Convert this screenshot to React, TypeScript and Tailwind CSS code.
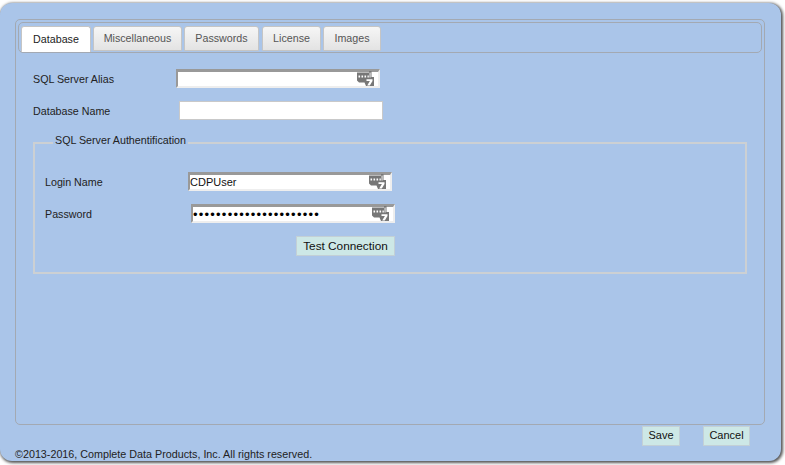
const labelClass = "text-[10.7px] text-[#222] pt-[2px]";

function KeyIcon() {
  return (
    <svg className="absolute right-[6px] top-[2px] w-[17px] h-[15px]" viewBox="0 0 17 15">
      <path d="M0 1.5h12V0h2.5v6H17v9H9l-1.5-3.5H2L0 9.5z" fill="#777" />
      <path d="M1.5 4.6h1.6v1.8H1.5zM4.5 4.6h1.6v1.8H4.5zM7.5 4.6h1.6v1.8H7.5zM10.5 4.6h1.3v1.8h-1.3zM12.6 1.5h.9v4.9h-.9z" fill="#fff" />
      <path d="M9.5 8.2h6v1.7L12.8 14.5h-2.6l2.7-4.4H9.5z" fill="#fff" />
    </svg>
  );
}

function SecureInput({ value, dots }: { value?: string; dots?: boolean }) {
  return (
    <div className="relative h-[19px] w-[204px] bg-white border-t-[3px] border-l-2 border-t-[#999] border-l-[#999] border-r-2 border-b-2 border-r-[#eee] border-b-[#eee]">
      <span className={dots ? "absolute left-0 top-[1px] text-[13px] leading-[14px] tracking-[1.22px] text-black" : "absolute left-0 top-[0px] text-[11px] leading-[14px] text-[#111]"}>
        {value}
      </span>
      <div className="absolute -right-[2px] -top-[3px] w-[24px] h-[19px]">
        <KeyIcon />
      </div>
    </div>
  );
}

function Tab({ label, active, width, margin }: { label: string; active?: boolean; width: string; margin: string }) {
  return (
    <div
      className={
        active
          ? `${width} ${margin} h-[26px] flex items-center justify-center rounded-t-[3px] border border-b-0 border-[#c5c5c5] bg-white text-[10.7px] text-[#222]`
          : `${width} ${margin} h-[25px] flex items-center justify-center rounded-t-[3px] border border-[#c5c5c5] bg-gradient-to-b from-[#f6f6f6] to-[#e3e3e3] text-[10.7px] text-[#555]`
      }
    >
      {label}
    </div>
  );
}

function ActionButton({ label, className }: { label: string; className: string }) {
  return (
    <button className={`flex items-center justify-center bg-[#cde8e6] border border-[#c3d0d6] text-[#111] ${className}`}>
      {label}
    </button>
  );
}

export default function App() {
  return (
    <div className="w-[785px] h-[465px] bg-white overflow-hidden pt-[3px] font-['Liberation_Sans',Arial,sans-serif]">
      <div className="w-[781px] h-[458px] bg-[#aac5e9] rounded-[12px] shadow-[1px_1px_3px_1px_#555] pt-[16px] px-[15px]">
        <div className="w-[750px] h-[406px] rounded-[5px] border border-[#a3a9b2] p-[2px]">
          <div className="h-[31px] rounded-[5px] border border-[#a3a9b2] pl-[2px] pt-[3px] flex items-start">
            <Tab label="Database" active width="w-[70px]" margin="" />
            <Tab label="Miscellaneous" width="w-[89px]" margin="ml-[2px]" />
            <Tab label="Passwords" width="w-[75px]" margin="ml-[2px]" />
            <Tab label="License" width="w-[59px]" margin="ml-[3px]" />
            <Tab label="Images" width="w-[58px]" margin="ml-[2px]" />
          </div>

          <div className="pt-[16px] pl-[15px]">
            <div className="flex items-center h-[19px]">
              <span className={`${labelClass} w-[143px]`}>SQL Server Alias</span>
              <SecureInput />
            </div>
            <div className="flex items-center h-[19px] mt-[13px]">
              <span className={`${labelClass} w-[146px]`}>Database Name</span>
              <div className="w-[204px] h-[19px] bg-white border border-[#c9c9c9]" />
            </div>

            <fieldset className="w-[714px] h-[140px] mt-[14px] border-2 border-[#ccd0d3] pl-[10px]">
              <legend className="ml-[8px] px-[2px] pb-[4px] text-[10.7px] leading-[13px] text-[#222]">SQL Server Authentification</legend>
              <div className="flex items-center h-[19px] mt-[21px]">
                <span className={`${labelClass} w-[143px]`}>Login Name</span>
                <SecureInput value="CDPUser" />
              </div>
              <div className="flex items-center h-[19px] mt-[13px]">
                <span className={`${labelClass} w-[146px]`}>Password</span>
                <SecureInput value="••••••••••••••••••••••" dots />
              </div>
              <div className="mt-[13px] ml-[251px]">
                <ActionButton label="Test Connection" className="w-[99px] h-[20px] pt-[1px] text-[11.8px]" />
              </div>
            </fieldset>
          </div>
        </div>

        <div className="flex justify-end pr-[16px] mt-[1px]">
          <ActionButton label="Save" className="w-[38px] h-[20px] pb-[1px] text-[11px]" />
          <ActionButton label="Cancel" className="w-[47px] h-[20px] ml-[23px] pb-[1px] text-[11px]" />
        </div>
        <div className="text-[10.75px] leading-[12px] text-[#222] mt-[2px]">©2013-2016, Complete Data Products, Inc. All rights reserved.</div>
      </div>
    </div>
  );
}
